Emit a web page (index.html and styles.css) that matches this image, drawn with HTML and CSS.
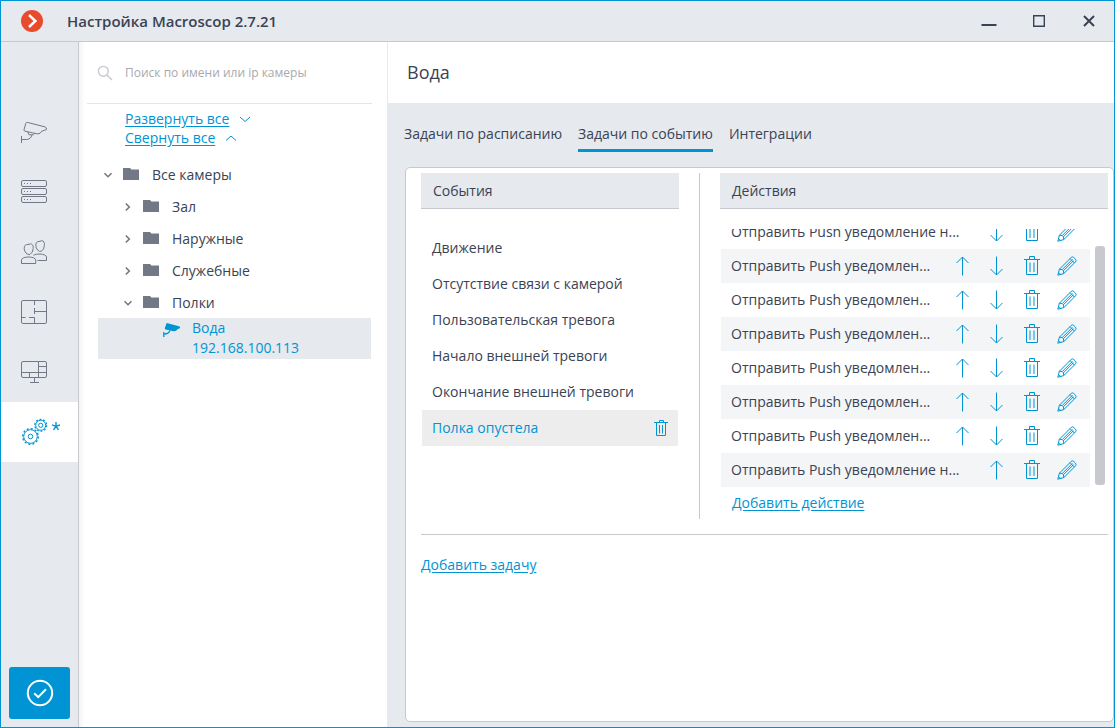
FILE: index.html
```html
<!DOCTYPE html>
<html lang="ru">
<head>
<meta charset="utf-8">
<meta name="viewport" content="width=device-width, initial-scale=1">
<title>Настройка Macroscop 2.7.21</title>
<link rel="stylesheet" href="styles.css">
</head>
<body>
<svg class="sprite" aria-hidden="true">
  <symbol id="i-up" viewBox="0 0 20 20"><path d="M9.5 19.5V1M3.5 7L9.5 1L15.5 7"/></symbol>
  <symbol id="i-down" viewBox="0 0 20 20"><path d="M9.5 .5V19M3.5 13L9.5 19L15.5 13"/></symbol>
  <symbol id="i-trash" viewBox="0 0 20 20"><path d="M2 3.5H18M4.5 3.5V18.5H15.5V3.5M7.5 3V.5H12.5V3"/><path d="M8 6.5V16M12 6.5V16" stroke-width="2" opacity=".5"/></symbol>
  <symbol id="i-pencil" viewBox="0 0 20 20"><path d="M.8 19.2L2.4 13.2L14.2 1.4Q15.5 .3 16.8 1.5L18.5 3.2Q19.7 4.5 18.6 5.8L6.8 17.6ZM2.4 13.2L5.2 13.6L6.4 14.8L6.8 17.6M5.2 13.6L15.4 3.4M6.4 14.8L16.6 4.6M13 2.6L17.4 7M1.6 16.4L3.6 18.4"/></symbol>
  <symbol id="i-folder" viewBox="0 0 16 12"><path d="M0 0H7L8.5 1.5H16V12H0Z" fill="currentColor" stroke="none"/></symbol>
  <symbol id="i-open" viewBox="0 0 10 10"><path d="M1.5 3.2L5 6.7L8.5 3.2" stroke-width="1.6"/></symbol>
  <symbol id="i-closed" viewBox="0 0 10 10"><path d="M2.8 1.5L6.3 5L2.8 8.5" stroke-width="1.6"/></symbol>
</svg>
<div class="window">
  <header class="titlebar">
    <svg class="logo" viewBox="0 0 22 22" aria-hidden="true"><circle cx="11" cy="11" r="11" fill="#e84b2c"/><path d="M8 5L14.4 11L8 17" fill="none" stroke="#fff" stroke-width="2.4"/></svg>
    <h1 class="app-title">Настройка Macroscop 2.7.21</h1>
    <div class="window-buttons">
      <button type="button" aria-label="Свернуть"><svg viewBox="0 0 16 16"><path d="M.5 12H15.5" stroke-width="2"/></svg></button>
      <button type="button" aria-label="Развернуть"><svg viewBox="0 0 16 16"><path d="M2.7 2.7H13.3V13.3H2.7Z" stroke-width="1.4"/></svg></button>
      <button type="button" aria-label="Закрыть"><svg viewBox="0 0 16 16"><path d="M3 3L13 13M13 3L3 13" stroke-width="2"/></svg></button>
    </div>
  </header>
  <div class="body">
    <nav class="rail" aria-label="Разделы">
      <button class="rail-item" type="button" aria-label="Камеры"><svg class="rail-icon" viewBox="0 0 28 28"><path d="M5.8 5.2Q6.2 4.2 7.4 4.4L25 8.9Q27 9.6 26.4 11.6L21.8 13.2Q20.4 16 17.4 15.9L5 13.2Q3.8 12.8 4 11.8ZM7.8 14L9 16.8H13.3L14.5 15.5M12 17Q10.8 21.3 6.5 21.5H1.5M1.5 18V25"/></svg></button>
      <button class="rail-item" type="button" aria-label="Серверы"><svg class="rail-icon" viewBox="0 0 28 28"><rect x="1.5" y="2.5" width="25" height="6" rx="1.5"/><rect x="1.5" y="10.5" width="25" height="6" rx="1.5"/><rect x="1.5" y="18.5" width="25" height="6" rx="1.5"/><path d="M4 5.5H12M4 13.5H12M4 21.5H12" stroke-dasharray="1 2"/></svg></button>
      <button class="rail-item" type="button" aria-label="Пользователи"><svg class="rail-icon" viewBox="0 0 28 28"><path d="M4.2 10.5Q4.3 6.2 8 6.5L10.5 5.9Q13.5 6 13.2 10.5Q13 14.6 10 16.4Q7.8 17.1 6 15Q4.2 13 4.2 10.5ZM1.5 25.5V21.9Q2 19.2 8.7 19Q15 19.2 15.7 21.9V25.5ZM15.8 7.6Q15.7 3.2 19 3.5L21.8 2.7Q24.8 3 24.4 7.4Q24.2 11.5 21.5 13.2Q19.5 14.1 17.5 12Q16 10 15.8 7.6ZM13.5 17.2Q15.7 15.9 20 16Q26 16.4 26.5 18.9V22.5H17.5"/></svg></button>
      <button class="rail-item" type="button" aria-label="Планы"><svg class="rail-icon" viewBox="0 0 28 28"><rect x="1.5" y="2.5" width="25" height="23" rx="1.5"/><path d="M14.5 2.5V7M14.5 10V16M14.5 13.5H26.5M1.5 19.5H5.5M9 19.5H14.5V25.5"/></svg></button>
      <button class="rail-item" type="button" aria-label="Мониторы"><svg class="rail-icon" viewBox="0 0 28 28"><rect x="1.5" y="3.5" width="25" height="16" rx="1.5"/><path d="M1.5 14.5H26.5M18.5 3.5V19.5M18.5 8.5H26.5M9.5 14.5V19.5M14.5 19.5V24.5M10 24.5H19"/></svg></button>
      <button class="rail-item active" type="button" aria-label="Автоматизация" aria-current="page"><svg class="gears" viewBox="0 0 40 30" aria-hidden="true"><circle cx="10.5" cy="19.5" r="6.8"/><circle cx="10.5" cy="19.5" r="7.8" stroke-width="1.4" stroke-dasharray="2.04 2.04"/><circle cx="10.5" cy="19.5" r="2.3"/><circle cx="20.7" cy="8.3" r="5"/><circle cx="20.7" cy="8.3" r="5.9" stroke-width="1.3" stroke-dasharray="1.85 1.85"/><circle cx="20.7" cy="8.3" r="2.1"/><path d="M36 5V9.3M32 7.9L36 9.3L40 7.9M33.5 12.8L36 9.3L38.5 12.8" stroke-width="1.4"/></svg></button>
      <button class="apply" type="button" aria-label="Применить"><svg viewBox="0 0 28 28"><circle cx="14" cy="14" r="12.2"/><path d="M8.2 14.2L12.2 18.2L20 10.2"/></svg></button>
    </nav>

    <aside class="cameras">
      <label class="search">
        <svg viewBox="0 0 16 16" aria-hidden="true"><circle cx="6.3" cy="6.3" r="4.9"/><path d="M10 10L15 15"/></svg>
        <input type="search" placeholder="Поиск по имени или ip камеры" aria-label="Поиск по имени или ip камеры">
      </label>
      <div class="tree-links">
        <div><a href="#expand">Развернуть все</a><svg viewBox="0 0 12 12" aria-hidden="true"><path d="M1 4L6 8.5L11 4"/></svg></div>
        <div><a href="#collapse">Свернуть все</a><svg viewBox="0 0 12 12" aria-hidden="true"><path d="M1 8.5L6 4L11 8.5"/></svg></div>
      </div>
      <ul class="tree">
        <li>
          <button class="node" type="button"><svg class="caret"><use href="#i-open"/></svg><svg class="folder"><use href="#i-folder"/></svg>Все камеры</button>
          <ul class="branch">
            <li><button class="node" type="button"><svg class="caret"><use href="#i-closed"/></svg><svg class="folder"><use href="#i-folder"/></svg>Зал</button></li>
            <li><button class="node" type="button"><svg class="caret"><use href="#i-closed"/></svg><svg class="folder"><use href="#i-folder"/></svg>Наружные</button></li>
            <li><button class="node" type="button"><svg class="caret"><use href="#i-closed"/></svg><svg class="folder"><use href="#i-folder"/></svg>Служебные</button></li>
            <li><button class="node" type="button"><svg class="caret"><use href="#i-open"/></svg><svg class="folder"><use href="#i-folder"/></svg>Полки</button></li>
          </ul>
        </li>
      </ul>
      <button class="camera" type="button">
        <svg viewBox="0 0 18 14" aria-hidden="true"><path d="M3.6 0L16 3.2Q17.8 3.9 16.8 5.2L14.6 6.2Q13.2 8.6 10.6 8.3L2.6 6.6Q1.4 6.2 1.9 5Z" fill="currentColor"/><path d="M7 7.5Q6.2 10.6 1 11.2M.8 9V14" fill="none" stroke="currentColor" stroke-width="1.3"/></svg>
        <span>Вода<br>192.168.100.113</span>
      </button>
    </aside>

    <main class="main">
      <h2 class="heading">Вода</h2>
      <nav class="tabs">
        <a href="#schedule">Задачи по расписанию</a>
        <a href="#event" class="current" aria-current="page">Задачи по событию</a>
        <a href="#integrations">Интеграции</a>
      </nav>
      <div class="card">
        <div class="task">
          <section class="events">
            <h3 class="column-title">События</h3>
            <ul class="event-list">
              <li>Движение</li>
              <li>Отсутствие связи с камерой</li>
              <li>Пользовательская тревога</li>
              <li>Начало внешней тревоги</li>
              <li>Окончание внешней тревоги</li>
              <li class="selected">Полка опустела<button class="icon-button small" type="button" aria-label="Удалить"><svg viewBox="0 0 18 18"><path d="M2 3.5H16M4.5 3.5V16.5H13.5V3.5M7.5 3V1.5H11.5V3M7.5 6V14.5M10.5 6V14.5"/></svg></button></li>
            </ul>
          </section>
          <section class="actions">
            <h3 class="column-title">Действия</h3>
            <div class="action-scroll">
              <ul class="action-list">
                <li><span>Отправить Push уведомление н...</span><button class="icon-button" type="button" aria-label="Вниз"><svg><use href="#i-down"/></svg></button><button class="icon-button wide" type="button" aria-label="Удалить"><svg><use href="#i-trash"/></svg></button><button class="icon-button wide" type="button" aria-label="Изменить"><svg><use href="#i-pencil"/></svg></button></li>
                <li><span>Отправить Push уведомлен...</span><button class="icon-button" type="button" aria-label="Вверх"><svg><use href="#i-up"/></svg></button><button class="icon-button" type="button" aria-label="Вниз"><svg><use href="#i-down"/></svg></button><button class="icon-button wide" type="button" aria-label="Удалить"><svg><use href="#i-trash"/></svg></button><button class="icon-button wide" type="button" aria-label="Изменить"><svg><use href="#i-pencil"/></svg></button></li>
                <li><span>Отправить Push уведомлен...</span><button class="icon-button" type="button" aria-label="Вверх"><svg><use href="#i-up"/></svg></button><button class="icon-button" type="button" aria-label="Вниз"><svg><use href="#i-down"/></svg></button><button class="icon-button wide" type="button" aria-label="Удалить"><svg><use href="#i-trash"/></svg></button><button class="icon-button wide" type="button" aria-label="Изменить"><svg><use href="#i-pencil"/></svg></button></li>
                <li><span>Отправить Push уведомлен...</span><button class="icon-button" type="button" aria-label="Вверх"><svg><use href="#i-up"/></svg></button><button class="icon-button" type="button" aria-label="Вниз"><svg><use href="#i-down"/></svg></button><button class="icon-button wide" type="button" aria-label="Удалить"><svg><use href="#i-trash"/></svg></button><button class="icon-button wide" type="button" aria-label="Изменить"><svg><use href="#i-pencil"/></svg></button></li>
                <li><span>Отправить Push уведомлен...</span><button class="icon-button" type="button" aria-label="Вверх"><svg><use href="#i-up"/></svg></button><button class="icon-button" type="button" aria-label="Вниз"><svg><use href="#i-down"/></svg></button><button class="icon-button wide" type="button" aria-label="Удалить"><svg><use href="#i-trash"/></svg></button><button class="icon-button wide" type="button" aria-label="Изменить"><svg><use href="#i-pencil"/></svg></button></li>
                <li><span>Отправить Push уведомлен...</span><button class="icon-button" type="button" aria-label="Вверх"><svg><use href="#i-up"/></svg></button><button class="icon-button" type="button" aria-label="Вниз"><svg><use href="#i-down"/></svg></button><button class="icon-button wide" type="button" aria-label="Удалить"><svg><use href="#i-trash"/></svg></button><button class="icon-button wide" type="button" aria-label="Изменить"><svg><use href="#i-pencil"/></svg></button></li>
                <li><span>Отправить Push уведомлен...</span><button class="icon-button" type="button" aria-label="Вверх"><svg><use href="#i-up"/></svg></button><button class="icon-button" type="button" aria-label="Вниз"><svg><use href="#i-down"/></svg></button><button class="icon-button wide" type="button" aria-label="Удалить"><svg><use href="#i-trash"/></svg></button><button class="icon-button wide" type="button" aria-label="Изменить"><svg><use href="#i-pencil"/></svg></button></li>
                <li><span>Отправить Push уведомление н...</span><button class="icon-button" type="button" aria-label="Вверх"><svg><use href="#i-up"/></svg></button><button class="icon-button wide" type="button" aria-label="Удалить"><svg><use href="#i-trash"/></svg></button><button class="icon-button wide" type="button" aria-label="Изменить"><svg><use href="#i-pencil"/></svg></button></li>
              </ul>
              <div class="scrollbar"><div class="thumb"></div></div>
            </div>
            <a class="add-action" href="#add-action">Добавить действие</a>
          </section>
        </div>
        <a class="add-task" href="#add-task">Добавить задачу</a>
      </div>
    </main>
  </div>
</div>
</body>
</html>
```

FILE: styles.css
```css
:root {
  --accent: #0094d4;
  --ink: #3a4354;
  --muted: #727885;
  --pane: #e6e9ee;
  --line: #c8c8cf;
}

* { box-sizing: border-box; }

body {
  margin: 0;
  font: 14px/20px "Open Sans", "Noto Sans", sans-serif;
  color: var(--ink);
}

h1, h2, h3, ul { margin: 0; padding: 0; font-weight: 400; }
ul { list-style: none; }
a { color: var(--accent); text-underline-offset: 2px; }
svg { display: block; flex: none; fill: none; stroke: currentColor; }

button {
  margin: 0;
  padding: 0;
  border: 0;
  background: none;
  font: inherit;
  color: inherit;
  cursor: pointer;
}

.sprite { position: absolute; width: 0; height: 0; }

.window {
  display: flex;
  flex-direction: column;
  min-height: 100vh;
  border: 1px solid var(--accent);
  background: var(--pane);
}

/* Title bar */
.titlebar {
  display: flex;
  align-items: center;
  height: 41px;
  padding: 0 17px 0 20px;
  border-bottom: 1px solid var(--line);
}
.logo { width: 22px; height: 22px; stroke: none; }
.app-title { margin-left: 24px; font-size: 15px; font-weight: 600; }
.window-buttons { display: flex; gap: 34px; margin-left: auto; }
.window-buttons svg { width: 16px; height: 16px; }

.body { display: flex; flex: 1; }

/* Section rail */
.rail {
  display: flex;
  flex-direction: column;
  flex: none;
  width: 78px;
  padding-top: 60px;
  border-right: 1px solid var(--line);
  color: var(--muted);
}
.rail-item { display: flex; align-items: center; height: 60px; padding-left: 19px; }
.rail-icon { width: 28px; height: 28px; }
.rail-item.active { background: #fff; color: var(--accent); }
.gears { width: 40px; height: 30px; }
.apply {
  display: grid;
  place-items: center;
  height: 52px;
  margin: auto 8px 8px;
  border-radius: 3px;
  background: var(--accent);
  color: #fff;
}
.apply svg { width: 28px; height: 28px; stroke-width: 2; }

/* Camera tree */
.cameras {
  flex: none;
  width: 309px;
  padding: 0 15px 0 8px;
  border-right: 1px solid var(--pane);
  background: linear-gradient(to right, #f2f4f6, #fff 6px);
}
.search {
  display: flex;
  align-items: center;
  gap: 12px;
  height: 62px;
  padding-left: 10px;
  border-bottom: 1px solid #e5e5e9;
}
.search svg { width: 16px; height: 16px; color: #c8c8cf; stroke-width: 1.4; }
.search input {
  flex: 1;
  min-width: 0;
  padding: 0;
  border: 0;
  outline: 0;
  background: none;
  font: inherit;
  font-size: 12px;
}
.search input::placeholder { color: #a9a9ad; opacity: 1; }

.tree-links { padding: 5px 0 0 38px; line-height: 19px; }
.tree-links div { display: flex; align-items: center; gap: 10px; }
.tree-links svg { width: 12px; height: 12px; color: var(--accent); }

.tree { padding: 12px 0 0 16px; }
.branch { padding-left: 20px; }
.node { display: flex; align-items: center; height: 32px; }
.caret { width: 10px; height: 10px; color: var(--muted); }
.folder { width: 16px; height: 12px; margin: 0 13px 2px 10px; color: var(--muted); }
.camera {
  display: flex;
  gap: 11px;
  width: calc(100% - 12px);
  margin: -1px 0 0 11px;
  padding: 0 0 1px 65px;
  background: var(--pane);
  color: var(--accent);
  text-align: left;
}
.camera svg { width: 18px; height: 14px; margin-top: 5px; stroke: none; }

/* Task area */
.main { display: flex; flex-direction: column; flex: 1; min-width: 0; }
.heading {
  height: 61px;
  padding: 0 19px;
  background: #fff;
  font-size: 18px;
  line-height: 60px;
}
.tabs { display: flex; gap: 16px; padding: 21px 16px 15px; }
.tabs a { padding-bottom: 5px; border-bottom: 3px solid transparent; color: var(--ink); text-decoration: none; }
.tabs .current { border-color: var(--accent); }

.card {
  flex: 1;
  margin: 0 0 5px 17px;
  padding: 5px 5px 15px 15px;
  border: 1px solid var(--line);
  border-radius: 5px;
  background: #fff;
}
.task {
  display: grid;
  grid-template-columns: 279fr 408fr;
  padding-bottom: 15px;
  border-bottom: 1px solid var(--line);
}
.column-title {
  padding: 8px 12px 7px;
  border-bottom: 1px solid var(--line);
  background: var(--pane);
  font-size: 14px;
}
.events { padding-right: 20px; border-right: 1px solid var(--line); }
.event-list { padding: 21px 1px 0; }
.event-list li {
  display: flex;
  align-items: center;
  justify-content: space-between;
  height: 36px;
  padding: 0 0 0 10px;
}
.event-list .selected { background: #ededed; color: var(--accent); }

.actions { min-width: 0; padding-left: 20px; }
.action-scroll { display: flex; gap: 5px; height: 258px; margin: 20px 3px 0 1px; }
.action-list {
  display: flex;
  flex: 1;
  flex-direction: column;
  justify-content: flex-end;
  min-width: 0;
  overflow: hidden;
}
.action-list li { display: flex; flex: none; align-items: center; height: 34px; padding: 0 6px 0 10px; }
.action-list li:nth-child(even) { background: #f4f5f7; }
.action-list span { flex: 1; min-width: 0; overflow: hidden; white-space: nowrap; }
.icon-button { display: grid; flex: none; place-items: center; width: 34px; height: 34px; color: var(--accent); }
.icon-button.wide { width: 35px; }
.icon-button svg { width: 20px; height: 20px; }
.icon-button.small svg { width: 18px; height: 18px; }

.scrollbar { width: 10px; padding: 17px 0 2px; }
.thumb { height: 100%; border-radius: 3px; background: var(--line); }

.add-action { display: block; width: max-content; margin: 6px 0 6px 12px; }
.add-task { display: block; width: max-content; margin-top: 20px; }
```
